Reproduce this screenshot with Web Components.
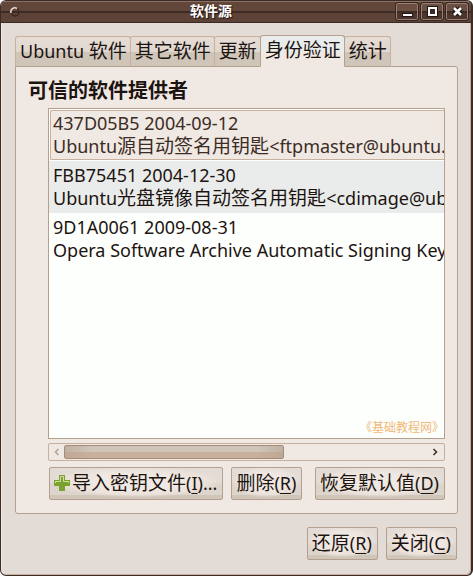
<!DOCTYPE html>
<html lang="zh-CN">
<head>
<meta charset="utf-8">
<title>软件源</title>
<style>
  body {
    --line: #b5a090;
    --line-soft: #c9b09c;
    --base: #e3dbd5;
    --pane: #f0e8e2;
    --latin: 18px;
    --han: 19px;
    margin: 0;
    background: #fff;
    color: #1c1411;
    font: var(--latin)/23px "Noto Sans", "Noto Sans CJK SC", sans-serif;
  }
  [lang="zh"] { font-size: var(--han); line-height: 1px; }
  u { text-decoration: underline; text-decoration-thickness: 1px; text-underline-offset: 3px; }
</style>
</head>
<body>
<app-window caption="软件源">
  <tab-bar>
    <tab-item>Ubuntu <span lang="zh">软件</span></tab-item>
    <tab-item><span lang="zh">其它软件</span></tab-item>
    <tab-item><span lang="zh">更新</span></tab-item>
    <tab-item selected><span lang="zh">身份验证</span></tab-item>
    <tab-item><span lang="zh">统计</span></tab-item>
  </tab-bar>
  <tab-pane>
    <span slot="heading">可信的软件提供者</span>
    <key-list>
      <key-row selected><span slot="key">437D05B5 2004-09-12</span>Ubuntu<span lang="zh">源自动签名用钥匙</span>&lt;ftpmaster@ubuntu.c</key-row>
      <key-row shaded><span slot="key">FBB75451 2004-12-30</span>Ubuntu<span lang="zh">光盘镜像自动签名用钥匙</span>&lt;cdimage@ub</key-row>
      <key-row><span slot="key">9D1A0061 2009-08-31</span>Opera Software Archive Automatic Signing Key</key-row>
      <span slot="mark">《基础教程网》</span>
    </key-list>
    <scroll-bar></scroll-bar>
    <push-button slot="actions"><plus-icon></plus-icon><span lang="zh">导入密钥文件</span>(<u>I</u>)...</push-button>
    <push-button slot="actions"><span lang="zh">删除</span>(<u>R</u>)</push-button>
    <push-button slot="actions" style="margin-left:auto"><span lang="zh">恢复默认值</span>(<u>D</u>)</push-button>
  </tab-pane>
  <push-button slot="footer"><span lang="zh">还原</span>(<u>R</u>)</push-button>
  <push-button slot="footer"><span lang="zh">关闭</span>(<u>C</u>)</push-button>
</app-window>

<script>
const define = (name, html, setup) => {
  const template = document.createElement('template');
  template.innerHTML = html;
  customElements.define(name, class extends HTMLElement {
    constructor() {
      super();
      this.attachShadow({ mode: 'open' }).append(template.content.cloneNode(true));
    }
    connectedCallback() { if (setup) setup(this, this.shadowRoot); }
  });
};

define('app-window', `
  <style>
    :host { display: flex; flex-direction: column; box-sizing: border-box; min-height: 100vh;
      background: var(--base); border: 1px solid #3c2c28; border-width: 1px 2px 1px 1px;
      border-radius: 6px; box-shadow: inset 1px 0 #f0e8e2, inset -1px -1px #c9b09c; overflow: hidden; }
    header { display: grid; grid-template-columns: 28px 1fr 78px; align-items: center; height: 21px;
      background: linear-gradient(#8a7164 0 1px, #62463a 1px 10px, #3f2b26 10px 12px, #5d4237 12px);
      border-bottom: 1px solid #3a2924; }
    h1 { margin: 0; padding-bottom: 3px; text-align: center; font: bold 14px/18px "Noto Sans CJK SC", sans-serif; color: #fff;
      text-shadow: 1px 1px 1px #1c100c; }
    button { display: block; padding: 0; border: 0; background: none; }
    svg { display: block; }
    .menu { margin-left: 8px; width: 12px; }
    .ctl { display: flex; gap: 3px; justify-content: flex-end; padding-right: 3px; }
    .ctl button { width: 22px; height: 17px; box-sizing: border-box; border: 1px solid #9a8074; border-radius: 2px;
      outline: 1px solid #35241f; outline-offset: 0; background: linear-gradient(#6b4f43 0 7px, #3f2b26 7px 9px, #4b352d 9px);
      display: grid; place-items: center; }
    main { flex: 1; display: flex; flex-direction: column; padding: 12px 13px 0 14px; }
    footer { display: flex; justify-content: flex-end; gap: 8px; padding: 13px 14px 15px; }
  </style>
  <header>
    <button class="menu" aria-label="菜单"><svg width="12" height="12" viewBox="0 0 12 12" fill="none" stroke-width="1.5"><circle cx="6" cy="6" r="4" stroke="#3a2823"/><path d="M2 7A4 4 0 0 1 8 2.5" stroke="#e8ded8"/></svg></button>
    <h1></h1>
    <div class="ctl">
      <button aria-label="最小化"><svg width="13" height="13" viewBox="0 0 13 13"><path d="M1 8h11v4H1z" fill="#1f1512"/><path d="M2 9h9v2H2z" fill="#fff"/></svg></button>
      <button aria-label="最大化"><svg width="13" height="13" viewBox="0 0 13 13"><path d="M1 1h11v11H1z" fill="#1f1512"/><path d="M2 2h9v9H2z" fill="#fff"/><path d="M4 4h5v5H4z" fill="#3a2924"/></svg></button>
      <button aria-label="关闭"><svg width="13" height="13" viewBox="0 0 13 13" fill="none"><path d="M3 3l7 7M10 3l-7 7" stroke="#1f1512" stroke-width="5"/><path d="M3 3l7 7M10 3l-7 7" stroke="#fff" stroke-width="2.6"/></svg></button>
    </div>
  </header>
  <main><slot></slot></main>
  <footer><slot name="footer"></slot></footer>`,
  (host, root) => { root.querySelector('h1').textContent = host.getAttribute('caption'); });

define('tab-bar', `
  <style>
    :host { display: flex; align-items: flex-end; height: 32px; margin-bottom: -1px; position: relative; }
  </style>
  <slot></slot>`, host => host.setAttribute('role', 'tablist'));

define('tab-item', `
  <style>
    :host { display: block; margin-right: -1px; }
    button { display: block; box-sizing: border-box; height: 31px; padding: 0 3px 1px 4px; white-space: pre;
      border: 1px solid var(--line-soft); border-bottom-color: var(--line); border-radius: 3px 3px 0 0;
      background: linear-gradient(#e5ddd6, #e0d7cf 15px, #cfc5b9 15px); font: inherit; color: inherit; }
    :host([selected]) { position: relative; }
    :host([selected]) button { height: 32px; border-color: var(--line); border-bottom-color: var(--pane);
      background: linear-gradient(#e8ecea 0 16px, var(--pane) 16px); padding-bottom: 2px; }
  </style>
  <button role="tab"><slot></slot></button>`,
  (host, root) => root.querySelector('button').setAttribute('aria-selected', host.hasAttribute('selected')));

define('tab-pane', `
  <style>
    :host { flex: 1; display: flex; flex-direction: column; padding: 9px 12px 13px; background: var(--pane);
      border: 1px solid var(--line); border-radius: 0 3px 3px 3px; }
    h2 { margin: 0 0 5px; font: bold 20px/27px "Noto Sans CJK SC", sans-serif; }
    .body { flex: 1; display: flex; flex-direction: column; margin-left: 20px; gap: 4px; }
    .actions { display: flex; gap: 8px; padding: 2px 0 0 1px; }
  </style>
  <h2><slot name="heading"></slot></h2>
  <div class="body"><slot></slot><div class="actions"><slot name="actions"></slot></div></div>`,
  host => host.setAttribute('role', 'tabpanel'));

define('key-list', `
  <style>
    :host { flex: 1; display: block; position: relative; overflow: hidden; background: #fdfffc; border: 1px solid var(--line); }
    .mark { position: absolute; right: 0; bottom: 2px; font: 12px/18px "Noto Sans CJK SC", sans-serif; color: #f0b878; }
  </style>
  <slot></slot><div class="mark"><slot name="mark"></slot></div>`,
  host => host.setAttribute('role', 'listbox'));

define('key-row', `
  <style>
    :host { display: block; box-sizing: border-box; height: 52px; padding: 3px 0 3px 4px; white-space: nowrap; }
    :host([shaded]) { background: #eaeceb; }
    :host([selected]) { color: #3c2c26; background: var(--pane); border: 1px solid var(--line-soft); border-right: 0;
      border-radius: 2px 0 0 2px; margin: 1px 0 1px 1px; height: 50px; padding: 1px 0 1px 2px; }
    div { height: 23px; }
  </style>
  <div><slot name="key"></slot></div><div><slot></slot></div>`,
  host => host.setAttribute('role', 'option'));

define('scroll-bar', `
  <style>
    :host { display: grid; grid-template-columns: 15px 1fr 19px; box-sizing: border-box; height: 18px;
      border: 1px solid var(--line-soft); border-radius: 2px; }
    button { padding: 0; border: 0; background: none; display: grid; place-items: center; }
    .thumb { width: 61%; height: 14px; margin-top: 1px; box-sizing: border-box; border: 1px solid #a58b7b; border-radius: 2px;
      background: linear-gradient(90deg, #b5a09088, #b5a09000 12% 88%, #b5a09088),
        linear-gradient(#cfc5b9 0 6px, #c9b09c 6px); }
  </style>
  <button aria-label="向左"><svg width="8" height="8" viewBox="0 0 8 8" fill="none" stroke="#b5a090" stroke-width="1.5"><path d="M5.500 1L2.500 4l3 3"/></svg></button>
  <div><div class="thumb"></div></div>
  <button aria-label="向右"><svg width="8" height="8" viewBox="0 0 8 8" fill="none" stroke="#3c2c26" stroke-width="1.500"><path d="M2.500 1l3 3-3 3"/></svg></button>`);

define('push-button', `
  <style>
    :host { display: block; }
    button { display: flex; align-items: baseline; box-sizing: border-box; height: 33px; padding: 4px 5px 0 4px; white-space: nowrap;
      border: 1px solid var(--line); border-radius: 2px; font: inherit; color: inherit;
      background: radial-gradient(ellipse 50% 50% at 50% 45%, #f0e8e2 50%, #eae2db 80%, #e5ddd600 100%),
        linear-gradient(#e3dbd5 0 15px, #ddd4cb 15px 27px, #cfc5b9 27px); }
  </style>
  <button><slot></slot></button>`);

define('plus-icon', `
  <style>:host { display: block; width: 16px; height: 16px; margin: 3px 2px 0 0; align-self: flex-start; } svg { display: block; }</style>
  <svg width="16" height="16" viewBox="0 0 16 16" aria-hidden="true">
    <path d="M5 0h6v5h5v6h-5v5H5v-5H0V5h5z" fill="#7ba22f"/>
    <path d="M1.500 8V6.500h5v-5h3v5h5V8" fill="none" stroke="#d3dfa4"/>
  </svg>`);
</script>
</body>
</html>
